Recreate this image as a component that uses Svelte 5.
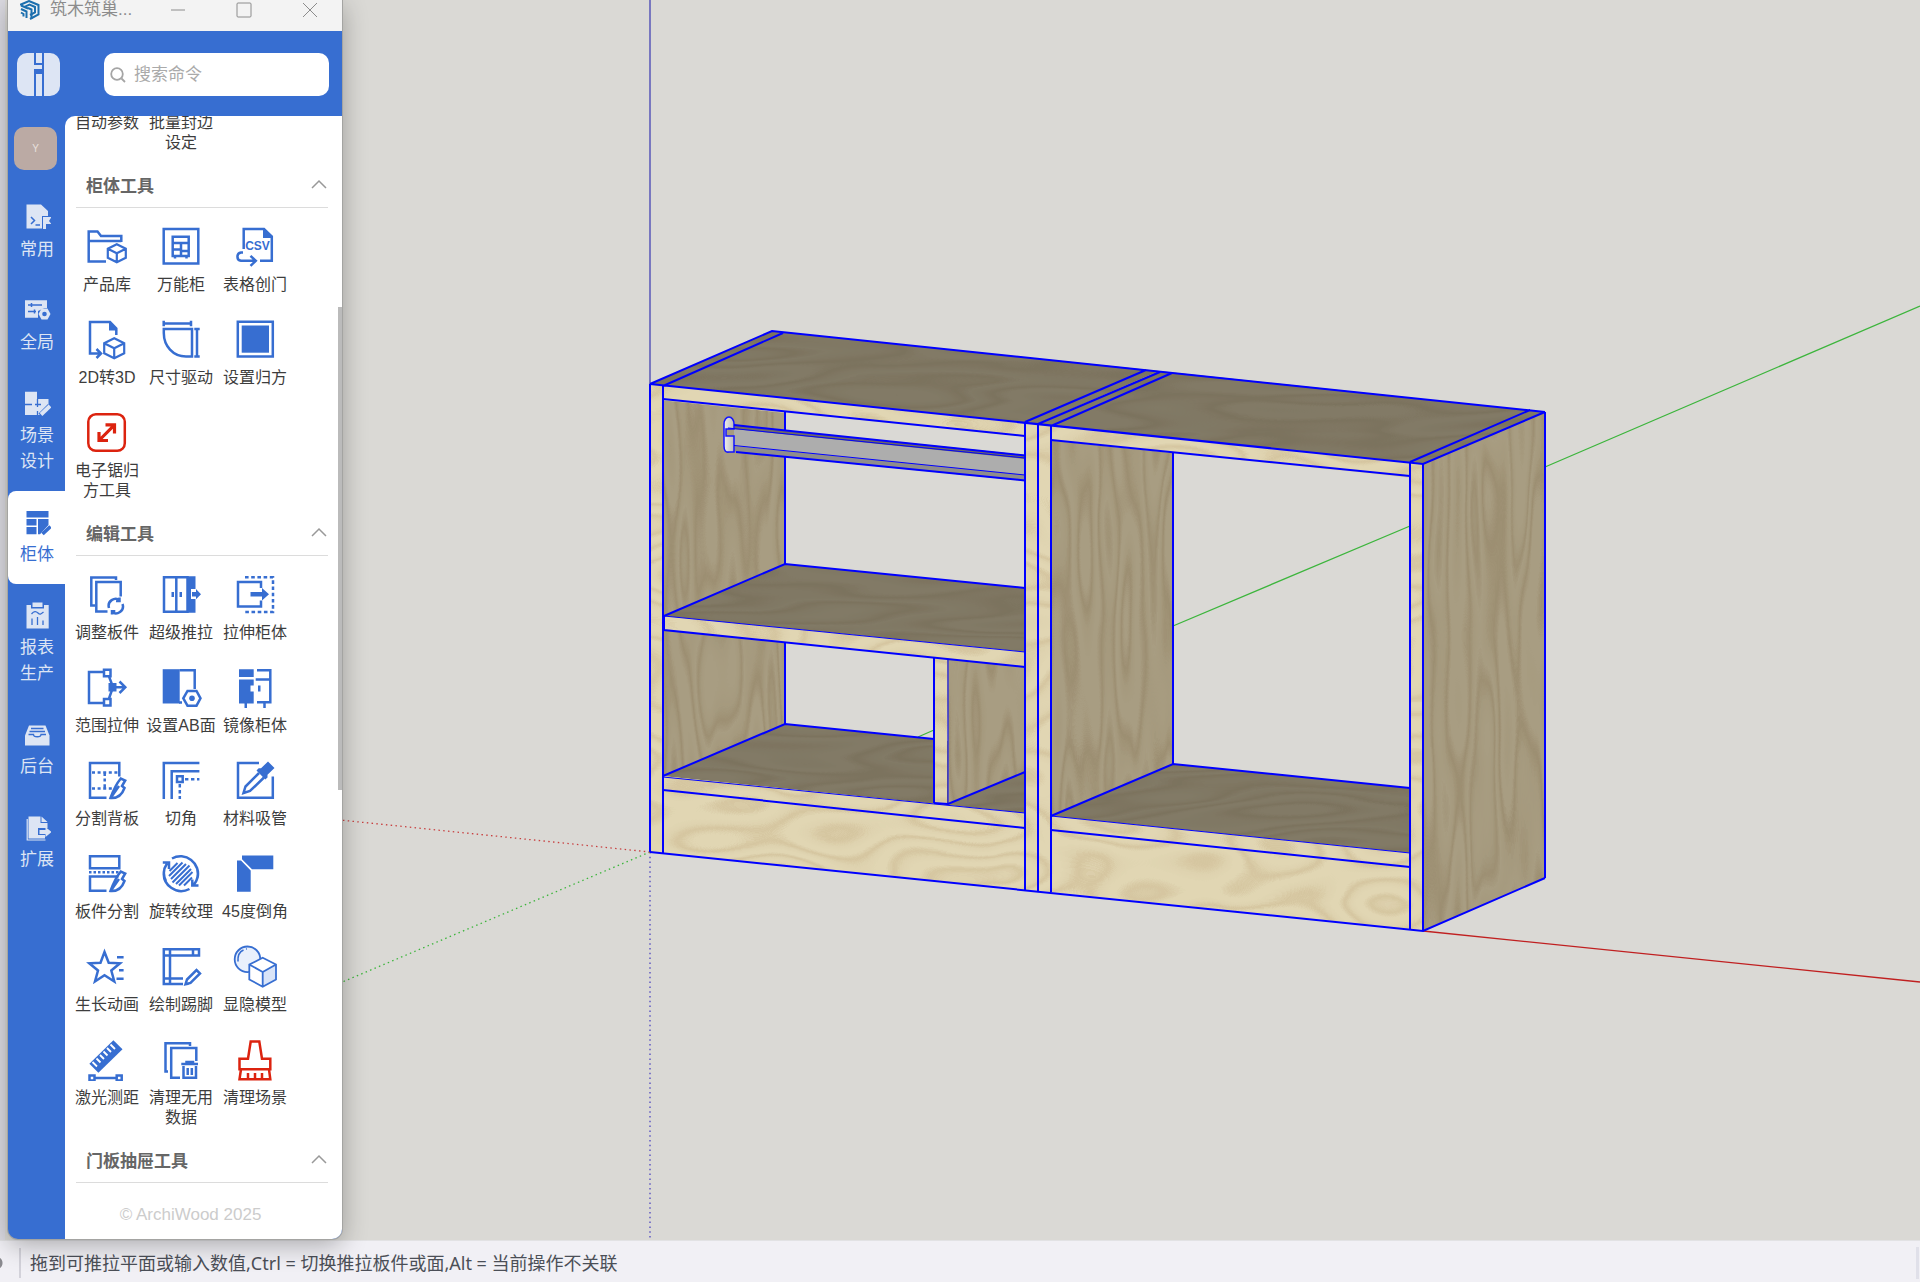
<script lang="ts">
	// icon bodies, 44x44 for the tools and 28x28 for the nav.
	// the wrapping <svg> sets stroke=currentColor, class-less so {@html} can be used
	const fill = 'fill="currentColor" stroke="none"';
	const knife = 'M25.5 40C28 33 32 25 35.8 20.5L40.2 22.5L37 28L39.5 30C37 37 32 40.5 25.5 40ZM27 38L34 28';
	const cube = (x: number, y: number, s: number) =>
		`<path d="M${x} ${y - s}l${s} ${s / 2}v${s}l${-s} ${s / 2}l${-s} ${-s / 2}v${-s}zM${x - s} ${y - s / 2}l${s} ${s / 2}l${s} ${-s / 2}M${x} ${y}v${s}" stroke-width="2.2"/>`;

	const icons: Record<string, string> = {
		library: `<path d="M21 37.5H3.7V7.5H12.5L16 12H36.3V18M3.7 17H36.3"/>${cube(31.8, 29.3, 9)}`,
		cabinet: `<path d="M4.7 5H39.3V39.5H4.7ZM13.7 12.7H29.7V32H13.7ZM13.7 19H29.7M22 19V32M13.7 25.5H22M22 27H29.7M16 32V34.5M27.5 32V34.5"/>`,
		csv: `<path d="M10.7 25V5H31L38.8 12.5V36.7H27M10 28.5H8A4.2 4.2 0 0 0 8 36.8H22M17.5 31.8L22.8 36.8L17.5 41.8"/><path d="M30 4V14H39.5Z" ${fill}/><text x="24.5" y="26" text-anchor="middle" font-family="Liberation Sans, sans-serif" font-weight="700" font-size="12" ${fill}>CSV</text>`,
		to3d: `<path d="M31.3 18V11.5L25 5H5V36.5H15.5M11.5 32L16 36.5L11.5 41"/><path d="M24 4V13.5H32.3Z" ${fill}/>${cube(29.2, 31.3, 10)}`,
		dimension: `<path d="M4.7 6.5H32M4.7 3.8V9.2M32 3.8V9.2M38 12V39.5M35.3 12H40.7M35.3 39.5H40.7M4.8 12H33V39.5H27C14 39.5 4.8 29 4.8 16Z"/>`,
		square: `<path d="M4.8 4.8H39.8V39.5H4.8Z"/><rect x="8.7" y="8.5" width="27.3" height="27.2" ${fill}/>`,
		saw: `<rect x="3.3" y="4.3" width="36.5" height="36.5" rx="7.5"/><path d="M14 30.5L29.5 14.8M20.5 14.8H29.5V23.5M14 22V30.5H23" stroke-width="3.2"/>`,
		adjust: `<path d="M31 8V5.5H6.3V33.5H10M35.7 24.5V10H11.3V39.5H22.5"/><path d="M24 36A7 7 0 0 1 35 28.4M37.5 32A7 7 0 0 1 26.5 39.8M34.5 25.5V29H31M27 42.5V39.2H30.3"/>`,
		pushpull: `<path d="M5 5.3H28.5V39.7H5ZM17.3 5.3V39.7" /><path d="M28.4 4.2H36.5V17H32V27H36.5V40.8H28.4ZM33 20H37V17L42 22.2L37 27.3V24.5H33ZM12.5 20H15V25H12.5ZM20.5 20H23V25H20.5Z" ${fill}/>`,
		stretch: `<path d="M28 16V10H5V34.5H28V28.5"/><path d="M12 5.3H40V40H11" stroke-dasharray="3.6 2.6"/><path d="M17.5 20H29V16L36 22.2L29 28.5V24.5H17.5Z" ${fill}/>`,
		range: `<path d="M18 7H4V38H18M19 4.7H25.5V11.2H19ZM19 34H25.5V40.5H19ZM24 11.5L28 22L24 33.5M28 22.3H40M34.5 16.5L40.3 22.3L34.5 28"/><path d="M23.5 18H31.5V26.5H23.5Z" ${fill}/>`,
		abface: `<path d="M20.5 5.3H35.7V24M20 37.5H23"/><path d="M3.7 4.2H20.7V38.5H3.7Z" ${fill}/><path d="M28.5 26H37.5L41.5 33.3L37.5 40.7H28.5L24.3 33.3Z"/><circle cx="33" cy="33.3" r="2.8" ${fill}/>`,
		mirror: `<path d="M24 5.3H37.3V37.3H24M22.7 14.5H37.3M31.5 38V43"/><path d="M6 4.2H20.7V12H6ZM6 14.5H20.7V20.5H17.5V26.5H20.7V38.5H14V43H11.5V38.5H6ZM25 20.5H27.5V26.5H25Z" ${fill}/>`,
		splitback: `<path d="M34.3 18.5V5H5V39.8H21.5"/><path d="M7 14.5H33M7 30.5H29M19.7 15V31" stroke-dasharray="3 2.6"/><path d="${knife}"/>`,
		corner: `<path d="M4.8 41V5H40.4M12.7 41V13.3H40.4M18 18.3H23.7V24H18Z"/><path d="M26 21.2H40.4M20.8 26V41" stroke-dasharray="3.4 2.6"/>`,
		pipette: `<path d="M26 5H5V39.8H39.8V18.5M26 15L12.5 28.5L10.5 35L17 33L31 19.5"/><path d="M35 3.5L41.5 10L34.5 16.8V19.5L32.3 21.5L23.5 12.5L25.7 10.3H28Z" ${fill}/>`,
		splitboard: `<path d="M5 5.3H34.3V17.3H5ZM33.5 25.5H5V39.8H21.5"/><path d="M4 21.3H36" stroke-dasharray="2.5 2"/><path d="${knife}"/>`,
		rotate: `<path d="M7 30A17 17 0 0 1 8 12.5M13 7.5A17.5 17.5 0 0 1 38.5 27M34.5 34A17 17 0 0 0 35.5 12.5M30.5 38A17.5 17.5 0 0 1 5 20M3.8 11.5H10V18M39.5 34.5H33.3V28.5"/><path d="M10.5 20L18.5 12M10 25L23.5 11.5M12 28L27 13M13.5 31.5L30.5 14.5M17 33L32 18M20 34.5L33.5 21M25 34.5L33 26.5" stroke-width="2"/>`,
		miter: `<path d="M9 4.5H40.3V18.3H19L9 8.3ZM4 9.5H8L17.7 19.5V40.8H4Z" ${fill}/>`,
		star: `<path d="M19.5 8L23.7 18.7L35 19.3L26.3 26.5L29.3 37.5L19.5 31.3L10 37.5L13 26.5L4.3 19.3L15.5 18.7Z"/><path d="M32 13.2H38.6M34 26.3H38.6M31.5 34.8H38.6"/>`,
		skirting: `<path d="M24 40H4.8V5.3H40V11.5H4.8M11 5.3V40M34 5.3V11.5M4.8 34.5H24M26.5 40.3L28 35.5L37.5 26L41 29.5L31.5 39ZM26.5 40.3L30 39.5"/>`,
		showhide: `<circle cx="14.5" cy="15.3" r="12.8" fill="#e9f0fc" stroke-width="1.8"/><path d="M5 17.5C4.5 11 7 7.5 10.5 6M13 5L13.8 4.9" stroke-width="1.6"/><path d="M29.7 13.8L43 20.5V35.5L29.7 42.7L16.3 35.5V20.5Z" fill="#fff" stroke="none"/><path d="M29.7 28L43 20.5V35.5L29.7 42.7Z" fill="#d9e4f8" stroke="none"/><path d="M29.7 13.8L43 20.5V35.5L29.7 42.7L16.3 35.5V20.5ZM16.3 20.5L29.7 28L43 20.5M29.7 28V42.7" stroke-width="1.8"/>`,
		ruler: `<path d="M28.4 3.3L37.5 12.3L13.4 35.8L4.4 26.7Z" ${fill}/><path d="M7.5 25L12 29.5M11.5 21.5L15.5 25.5M15 18L19 22M18.5 14.5L22.5 18.5M22 11L26 15M25.5 7.5L30 12" stroke="#fff" stroke-width="1.8"/><path d="M4.5 38.5H9.5V43.5H4.5ZM31.7 38.5H36.7V43.5H31.7ZM9.5 41H31.7"/>`,
		purge: `<path d="M31 9V6.2H6.5V34.5H9M37.3 24V11H12.2V40.8H21"/><path d="M22.3 27H39M27.5 26V25H34V26M24.5 29V40.8H37V29M28.7 31V38M32.8 31V38"/>`,
		brush: `<path d="M17.7 4.5H26.3L29 21.7H37.3V32.3H6.5V21.7H15ZM8 32.3L6.5 42.3H37.3L36 32.3M15 36V42M22 36V42M29 36V42"/>`,
		common: `<path d="M3.5 1.5H18L25 8V13H19V25.5H3.5Z" ${fill}/><path d="M20 14H28.5L26 18L28.5 21H23V26H20Z" ${fill}/><path d="M8 14L11.5 17.5L8 21M12.5 22H17" stroke="#376ed1" stroke-width="1.5"/>`,
		global: `<path d="M2 4.3H24V12H21.5L15 15V21.7H2Z" ${fill}/><path d="M5 9H19M5 15.5H13M8.5 7V11M11.5 13.5V17.5" stroke="#376ed1" stroke-width="1.5"/><path d="M18.5 12.5H24.5L27.5 18L24.5 23.5H18.5L15.5 18Z" ${fill}/><circle cx="21.5" cy="18" r="2.3" fill="#376ed1" stroke="none"/>`,
		scene: `<path d="M2 2.7H14V10H25.5V16L16.5 26H2Z" ${fill}/><path d="M2 15.5H9M12 15.5H18M14.5 10V18M14.5 22V26" stroke="#376ed1" stroke-width="1.3"/><path d="M18 27L27.5 17.5" stroke="#376ed1" stroke-width="7"/><path d="M18 25.5L27 17" stroke-width="4"/>`,
		cabinetnav: `<path d="M3.5 3H25.5V9.5H3.5ZM3.5 11H13.5V17.5H3.5ZM3.5 19H13.5V26.3H3.5ZM15 11H25.5V17L17 26.3H15Z" ${fill}/><path d="M19.5 26L27.5 18.5" stroke-width="3.6"/>`,
		report: `<path d="M3.5 4H25.7V27.5H3.5Z" ${fill}/><path d="M8 3H21V7.5H8Z" fill="#376ed1" stroke="none"/><path d="M9.5 1.5H19.5V6H9.5Z" ${fill}/><path d="M8.5 13C11 10 13 10 15 12S18 13 20.5 11M9 17.5V24M14.5 16V24M20 19.5V24" stroke="#376ed1" stroke-width="1.3"/>`,
		backend: `<path d="M6 5.5H22.5L26.5 15.5V25.5H2V15.5Z" ${fill}/><path d="M8 8.5H20.5M6.5 11.5H22M5.5 14.5H10.5C10.5 17.5 18 17.5 18 14.5H23" stroke="#376ed1" stroke-width="1.3"/>`,
		extend: `<path d="M5.5 3.5H17.5V10H24.5V15H15V22H22V25.5H5.5ZM18.5 3.5L24.5 9H18.5ZM16.5 17H22.5V14L28.5 19L22.5 24V21H16.5Z" ${fill}/><path d="M4.2 6V27H22.5" stroke-width="1.2"/>`
	};

	const navItems = [
		{ icon: 'common', lines: ['常用'] },
		{ icon: 'global', lines: ['全局'] },
		{ icon: 'scene', lines: ['场景', '设计'] },
		{ icon: 'cabinetnav', lines: ['柜体'] },
		{ icon: 'report', lines: ['报表', '生产'] },
		{ icon: 'backend', lines: ['后台'] },
		{ icon: 'extend', lines: ['扩展'] }
	];

	const groups = [
		{
			title: '柜体工具',
			tools: [
				{ icon: 'library', text: '产品库' },
				{ icon: 'cabinet', text: '万能柜' },
				{ icon: 'csv', text: '表格创门' },
				{ icon: 'to3d', text: '2D转3D' },
				{ icon: 'dimension', text: '尺寸驱动' },
				{ icon: 'square', text: '设置归方' },
				{ icon: 'saw', text: '电子锯归方工具', red: true }
			]
		},
		{
			title: '编辑工具',
			tools: [
				{ icon: 'adjust', text: '调整板件' },
				{ icon: 'pushpull', text: '超级推拉' },
				{ icon: 'stretch', text: '拉伸柜体' },
				{ icon: 'range', text: '范围拉伸' },
				{ icon: 'abface', text: '设置AB面' },
				{ icon: 'mirror', text: '镜像柜体' },
				{ icon: 'splitback', text: '分割背板' },
				{ icon: 'corner', text: '切角' },
				{ icon: 'pipette', text: '材料吸管' },
				{ icon: 'splitboard', text: '板件分割' },
				{ icon: 'rotate', text: '旋转纹理' },
				{ icon: 'miter', text: '45度倒角' },
				{ icon: 'star', text: '生长动画' },
				{ icon: 'skirting', text: '绘制踢脚' },
				{ icon: 'showhide', text: '显隐模型' },
				{ icon: 'ruler', text: '激光测距' },
				{ icon: 'purge', text: '清理无用数据' },
				{ icon: 'brush', text: '清理场景', red: true }
			]
		},
		{ title: '门板抽屉工具', tools: [] }
	];

	// cabinet faces, painted back to front
	const faces = [
		{ kind: 'side', pts: '662,399 785,411 785,724 662,776' },
		{ kind: 'side', pts: '1051,439 1173,452 1173,764 1051,816' },
		{ kind: 'side', pts: '1423,464 1545,412 1545,878 1423,931' },
		{ kind: 'top', pts: '650,384 772,331 1159,371 1037,424' },
		{ kind: 'top', pts: '1037,424 1159,371 1545,412 1423,464' },
		{ kind: 'top', pts: '664,616 785,564 1025,588 1025,652' },
		{ kind: 'top', pts: '662,776 785,724 1025,749 1025,813' },
		{ kind: 'top', pts: '1051,816 1173,764 1410,788 1410,853' },
		{ kind: 'side', pts: '947,659 1025,667 1025,772 948,804' },
		{ kind: 'edge', pts: '650,384 1423,464 1423,479 650,399' },
		{ kind: 'edge', pts: '664,616 1025,652 1025,667 664,630' },
		{ kind: 'edge', pts: '662,776 1025,813 1025,828 662,790' },
		{ kind: 'edge', pts: '1051,816 1410,853 1410,867 1051,830' },
		{ kind: 'edge', pts: '934,657 947,659 947,804 934,803' },
		{ kind: 'front', pts: '662,790 1025,828 1025,890 662,853' },
		{ kind: 'front', pts: '1051,830 1410,867 1410,929 1051,892' },
		{ kind: 'edge', pts: '650,384 662,386 662,853 650,852' },
		{ kind: 'edge', pts: '1025,422 1051,426 1051,892 1025,890' },
		{ kind: 'edge', pts: '1410,462 1423,464 1423,931 1410,929' }
	];

	let keyword = $state('');
	let activeNav = $state('柜体');
	let closed: Record<string, boolean> = $state({});

	function toggle(title: string) {
		closed[title] = !closed[title];
	}
</script>

<div class="app">
	<main class="viewport">
		<svg class="scene" viewBox="0 0 1920 1240" preserveAspectRatio="xMinYMin slice" aria-label="柜体模型">
			<defs>
				<filter id="grainSide" x="0" y="0" width="1" height="1" color-interpolation-filters="sRGB">
					<feTurbulence type="fractalNoise" baseFrequency="0.03 0.004" numOctaves="2" seed="4" />
					<feColorMatrix values="0 0 0 0 .57  0 0 0 0 .5  0 0 0 0 .38  1 0 0 0 0" />
					<feComponentTransfer><feFuncA type="table" tableValues="0 0 .1 .4 0 0 .1 .45 0 .1 .5 0 0 .1 .5 0 0 .1 .4 0 0" /></feComponentTransfer>
					<feComposite in2="SourceGraphic" operator="in" />
				</filter>
				<filter id="grainTop" x="0" y="0" width="1" height="1" color-interpolation-filters="sRGB">
					<feTurbulence type="fractalNoise" baseFrequency="0.004 0.03" numOctaves="2" seed="9" />
					<feColorMatrix values="0 0 0 0 .44  0 0 0 0 .4  0 0 0 0 .31  1 0 0 0 0" />
					<feComponentTransfer><feFuncA type="table" tableValues="0 0 .1 .3 0 0 .1 .35 0 .1 .35 0 0 .1 .35 0 0 .1 .3 0 0" /></feComponentTransfer>
					<feComposite in2="SourceGraphic" operator="in" />
				</filter>
				<filter id="grainFront" x="0" y="0" width="1" height="1" color-interpolation-filters="sRGB">
					<feTurbulence type="fractalNoise" baseFrequency="0.009 0.02" numOctaves="1" seed="12" />
					<feColorMatrix values="0 0 0 0 .79  0 0 0 0 .71  0 0 0 0 .55  1 0 0 0 0" />
					<feComponentTransfer><feFuncA type="table" tableValues="0 .1 .5 0 0 .1 .5 0 0 .1 .5 0 0 .1 .5 0 0 .1 .5 0 0 .1 .5 0 0 .1 .5 0 0 .1 .5 0 0" /></feComponentTransfer>
					<feComposite in2="SourceGraphic" operator="in" />
				</filter>
				<linearGradient id="bracket"><stop offset="0" stop-color="#eee" /><stop offset="1" stop-color="#bbb" /></linearGradient>
			</defs>

			<!-- axes -->
			<g fill="none" stroke-width="1.3">
				<path d="M650 0V384" stroke="#4443b4" />
				<path d="M918 737L934 730M1173 626L1410 526M1545 467L1920 306" stroke="#3cb53c" />
				<path d="M1423 931L1920 982" stroke="#c02020" />
				<g stroke-dasharray="1.5 3.3">
					<path d="M650 852V1240" stroke="#4d46c0" />
					<path d="M650 852L340 983" stroke="#3cb53c" />
					<path d="M650 852L340 820" stroke="#c84040" />
				</g>
			</g>

			{#each faces as f}
				<polygon class={f.kind} points={f.pts} />
				<polygon class="grain-{f.kind}" points={f.pts} />
			{/each}

			<!-- open back behind the rail -->
			<polygon points="785,412 1025,437 1025,588 785,564" fill="#dad9d5" />

			<g class="lines">
				<path d="M785 411V564" />
			</g>

			<!-- hanging rail -->
			<polygon points="734,425 1025,455 1025,481 734,452" fill="#adadad" />
			<polygon points="734,425 1025,455 1025,459 734,429" fill="#6e6a66" />
			<polygon points="734,446 1025,475 1025,481 734,452" fill="#8f8d8c" />
			<path d="M724 424A5 7 0 0 1 734 424V429H726V436H734V452H729Q724 453 724 446Z" fill="url(#bracket)" stroke="#1414ff" stroke-width="1.5" />

			<g class="lines">
				<path d="M734 425L1025 455.500M736 452L1025 480.500" />
				<path class="thin" d="M728 428L1025 458M734 445.500L1025 475" />
				<!-- top outline -->
				<path d="M650 384L772 331L1545 412M650 384L1423 464L1545 412M663 386L783 333M1025 422L1146 370M1038 424L1160 372M1051 426L1172 373M1410 462L1530 410" />
				<!-- verticals -->
				<path d="M650 384V852M663 386V853M1025 423V890M1038 424V891M1051 426V892M1410 462V929M1423 464V931M1545 412V878M785 642V724M1173 452V764M934 657V803" />
				<path class="thin" d="M948 659V804" />
				<!-- panel edges -->
				<path d="M663 399L1025 436M1051 440L1410 476M664 616L785 564L1025 588M664 616V630L1025 667M663 776L785 724L934 739M663 790L1025 828M934 803L948 804L1025 772M1051 816L1173 764L1410 788M1051 830L1410 867" />
				<path class="thin" d="M664 616L1025 652M663 777L1025 813M1051 816L1410 853" />
				<path d="M650 852L1423 931L1545 878" />
			</g>
		</svg>
	</main>

	<footer class="statusbar">
		<span class="dot"></span>
		<p>拖到可推拉平面或输入数值,Ctrl = 切换推拉板件或面,Alt = 当前操作不关联</p>
		<span class="grip"></span>
	</footer>

	<section class="panel" aria-label="筑木筑巢">
		<div class="titlebar">
			<svg class="brand" viewBox="0 0 20 20" fill="none" stroke="#1c6fae" stroke-width="2">
				<path d="M1 5.5V4.5L9 1L18.5 5V14.5L10 19" />
				<path d="M4.5 6.8L9.5 4.5L15 7V12.5L10 15" />
				<path d="M1 9L6.5 11.5V18M1 12.5L3.5 14V16.5M8 8L11.5 9.5V19M1 5.5L8 8.5" />
			</svg>
			<span class="title">筑木筑巢...</span>
			<button aria-label="最小化"><svg viewBox="0 0 16 16"><path d="M1 8H15" /></svg></button>
			<button aria-label="最大化"><svg viewBox="0 0 16 16"><rect x="1" y="1" width="14" height="14" rx="1" /></svg></button>
			<button aria-label="关闭"><svg viewBox="0 0 16 16"><path d="M1 1L15 15M15 1L1 15" /></svg></button>
		</div>

		<header class="header">
			<svg class="logo" viewBox="0 0 43 43" fill="#dde5f4">
				<path d="M10 0H17V12H25V16H17V43H10A10 10 0 0 1 0 33V10A10 10 0 0 1 10 0ZM19 0H25V10H19ZM27 0H33A10 10 0 0 1 43 10V33A10 10 0 0 1 33 43H27ZM19 21H25V43H19Z" />
			</svg>
			<label class="search">
				<svg viewBox="0 0 16 16" fill="none" stroke="#a5a5a5" stroke-width="1.8"><circle cx="7" cy="7" r="5.8" /><path d="M11.5 11.5L15 15" /></svg>
				<input type="text" placeholder="搜索命令" aria-label="搜索命令" bind:value={keyword} />
			</label>
		</header>

		<div class="body">
			<nav class="sidebar">
				<div class="avatar">Y</div>
				{#each navItems as item}
					{@const name = item.lines.join('')}
					<button class="nav-item" class:active={activeNav === name} onclick={() => (activeNav = name)}>
						<svg viewBox="0 0 28 28" fill="none" stroke="currentColor">{@html icons[item.icon]}</svg>
						{#each item.lines as line}
							<span>{line}</span>
						{/each}
					</button>
				{/each}
			</nav>

			<div class="content">
				<div class="tools-wrap">
					<div class="tools tail">
						<span class="label">自动参数</span>
						<span class="label">批量封边设定</span>
					</div>
					{#each groups as group}
						<button class="group-head" onclick={() => toggle(group.title)}>
							<span>{group.title}</span>
							<svg viewBox="0 0 16 10" class:closed={closed[group.title]}><path d="M1 9L8 2L15 9" /></svg>
						</button>
						{#if group.tools.length && !closed[group.title]}
							<div class="tools">
								{#each group.tools as tool}
									<button class="tool" class:red={tool.red}>
										<svg viewBox="0 0 44 44" fill="none" stroke="currentColor" stroke-width="2.5">{@html icons[tool.icon]}</svg>
										<span class="label">{tool.text}</span>
									</button>
								{/each}
							</div>
						{/if}
					{/each}
					<div class="scrollbar"></div>
				</div>
				<p class="copyright">© ArchiWood 2025</p>
			</div>
		</div>
	</section>
</div>

<style>
	:global(body) {
		margin: 0;
	}
	.app {
		position: relative;
		display: flex;
		flex-direction: column;
		min-height: 100vh;
		background: #dad9d5;
		font-family: 'Liberation Sans', 'Noto Sans CJK SC', sans-serif;
		overflow: hidden;
	}
	button {
		border: 0;
		padding: 0;
		background: none;
		font: inherit;
		color: inherit;
		cursor: pointer;
	}
	p {
		margin: 0;
	}

	/* model view */
	.viewport {
		flex: 1;
		min-height: 0;
		border-left: 5px solid #dcdbe2;
		display: flex;
	}
	.scene {
		flex: 1;
		width: 100%;
		margin-left: -5px;
	}
	.side {
		fill: #a89d82;
	}
	.top {
		fill: #827a66;
	}
	.edge,
	.front {
		fill: #e1d6b3;
	}
	.grain-side {
		filter: url(#grainSide);
	}
	.grain-top {
		filter: url(#grainTop);
	}
	.grain-front,
	.grain-edge {
		filter: url(#grainFront);
	}
	.lines {
		fill: none;
		stroke: #0000ff;
		stroke-width: 2;
	}
	.lines .thin {
		stroke-width: 1;
	}

	/* status bar */
	.statusbar {
		display: flex;
		align-items: center;
		gap: 9px;
		height: 42px;
		padding: 2px 1px 0 0;
		box-sizing: border-box;
		border-top: 1px solid #e2e2e4;
		background: #f1f0f5;
		color: #4b4f57;
		font-family: 'Noto Sans', 'Noto Sans CJK SC', sans-serif;
		font-size: 18px;
		line-height: 30px;
		white-space: nowrap;
	}
	.statusbar p {
		flex: 1;
		padding-left: 9px;
		border-left: 2px solid #d3d2da;
	}
	.dot {
		width: 10px;
		height: 12px;
		background: radial-gradient(circle at -4px 6px, #8a8a8f 6px, transparent 7px);
	}
	.grip {
		width: 3px;
		height: 32px;
		background: #e0e0e9;
	}

	/* floating tool window */
	.panel {
		position: absolute;
		top: 0;
		left: 8px;
		bottom: 43px;
		width: 334px;
		display: flex;
		flex-direction: column;
		background: #376ed1;
		border-radius: 0 0 10px 10px;
		box-shadow:
			0 0 0 1px #a4a4a2,
			0 6px 26px rgba(0, 0, 0, 0.3);
		overflow: hidden;
	}
	.titlebar {
		display: flex;
		align-items: flex-start;
		height: 31px;
		padding: 0 24px 0 12px;
		background: #f3f3f3;
		color: #8c8c8c;
		font-size: 17px;
		line-height: 20px;
	}
	.brand {
		width: 20px;
		height: 20px;
	}
	.title {
		flex: 1;
		padding-left: 10px;
	}
	.titlebar button {
		width: 16px;
		height: 16px;
		margin: 2px 0 0 50px;
	}
	.titlebar button:first-of-type {
		margin-left: 0;
	}
	.titlebar button svg {
		display: block;
		fill: none;
		stroke: #8c8c8c;
	}
	.header {
		display: flex;
		align-items: center;
		justify-content: space-between;
		height: 85px;
		padding: 1px 13px 0 9px;
		box-sizing: border-box;
	}
	.logo {
		width: 43px;
		height: 43px;
	}
	.search {
		display: flex;
		align-items: center;
		gap: 8px;
		width: 225px;
		height: 43px;
		padding: 2px 6px 0;
		box-sizing: border-box;
		border-radius: 10px;
		background: #fff;
	}
	.search svg {
		width: 16px;
		height: 16px;
		flex: none;
	}
	.search input {
		flex: 1;
		min-width: 0;
		padding: 0;
		border: 0;
		outline: 0;
		background: none;
		font: inherit;
		font-size: 17px;
		color: #444;
	}
	.search input::placeholder {
		color: #aaa;
	}
	.body {
		flex: 1;
		min-height: 0;
		display: flex;
	}
	.sidebar {
		width: 57px;
		display: flex;
		flex-direction: column;
		flex: none;
	}
	.avatar {
		width: 43px;
		height: 43px;
		margin: 11px 0 16px 6px;
		border-radius: 10px;
		background: #bbaaa4;
		color: #e8e0dd;
		font-size: 10px;
		line-height: 43px;
		text-align: center;
	}
	.nav-item {
		display: flex;
		flex-direction: column;
		align-items: center;
		padding: 17px 0 16px 1px;
		border-radius: 8px 0 0 8px;
		color: #dde5f4;
		font-size: 17px;
		line-height: 26px;
	}
	.nav-item svg {
		width: 28px;
		height: 28px;
		margin-bottom: 6px;
	}
	.nav-item.active {
		background: #fff;
		color: #376ed1;
	}
	.content {
		flex: 1;
		min-width: 0;
		display: flex;
		flex-direction: column;
		background: #fff;
		border-radius: 10px 0 0 0;
		overflow: hidden;
	}
	.tools-wrap {
		position: relative;
		flex: 1;
		min-height: 0;
		overflow: hidden;
	}
	.tools {
		display: grid;
		grid-template-columns: repeat(3, 74px);
		row-gap: 22px;
		padding: 16px 0 9px 5px;
	}
	.tools.tail {
		margin-top: -3px;
		padding-top: 0;
	}
	.tool {
		display: flex;
		flex-direction: column;
		align-items: center;
		color: #376ed1;
	}
	.tool.red {
		color: #dc230f;
	}
	.tool svg {
		width: 44px;
		height: 44px;
		margin-bottom: 7px;
	}
	.label {
		color: #3d3d3d;
		font-size: 16px;
		line-height: 20px;
		text-align: center;
	}
	.group-head {
		display: flex;
		align-items: center;
		justify-content: space-between;
		width: calc(100% - 25px);
		height: 46px;
		margin: 0 14px 0 11px;
		padding: 0 1px 1px 10px;
		box-sizing: border-box;
		border-bottom: 1px solid #dcdcdc;
		color: #666;
		font-size: 17px;
		font-weight: 700;
	}
	.group-head svg {
		width: 16px;
		height: 10px;
		fill: none;
		stroke: #999;
		stroke-width: 1.5;
	}
	.group-head svg.closed {
		transform: rotate(180deg);
	}
	.scrollbar {
		position: absolute;
		top: 191px;
		right: 0;
		width: 4px;
		height: 483px;
		background: #bbb;
	}
	.copyright {
		padding: 16px 26px 14px 0;
		color: #ccc;
		font-size: 17px;
		line-height: 20px;
		text-align: center;
	}
</style>
